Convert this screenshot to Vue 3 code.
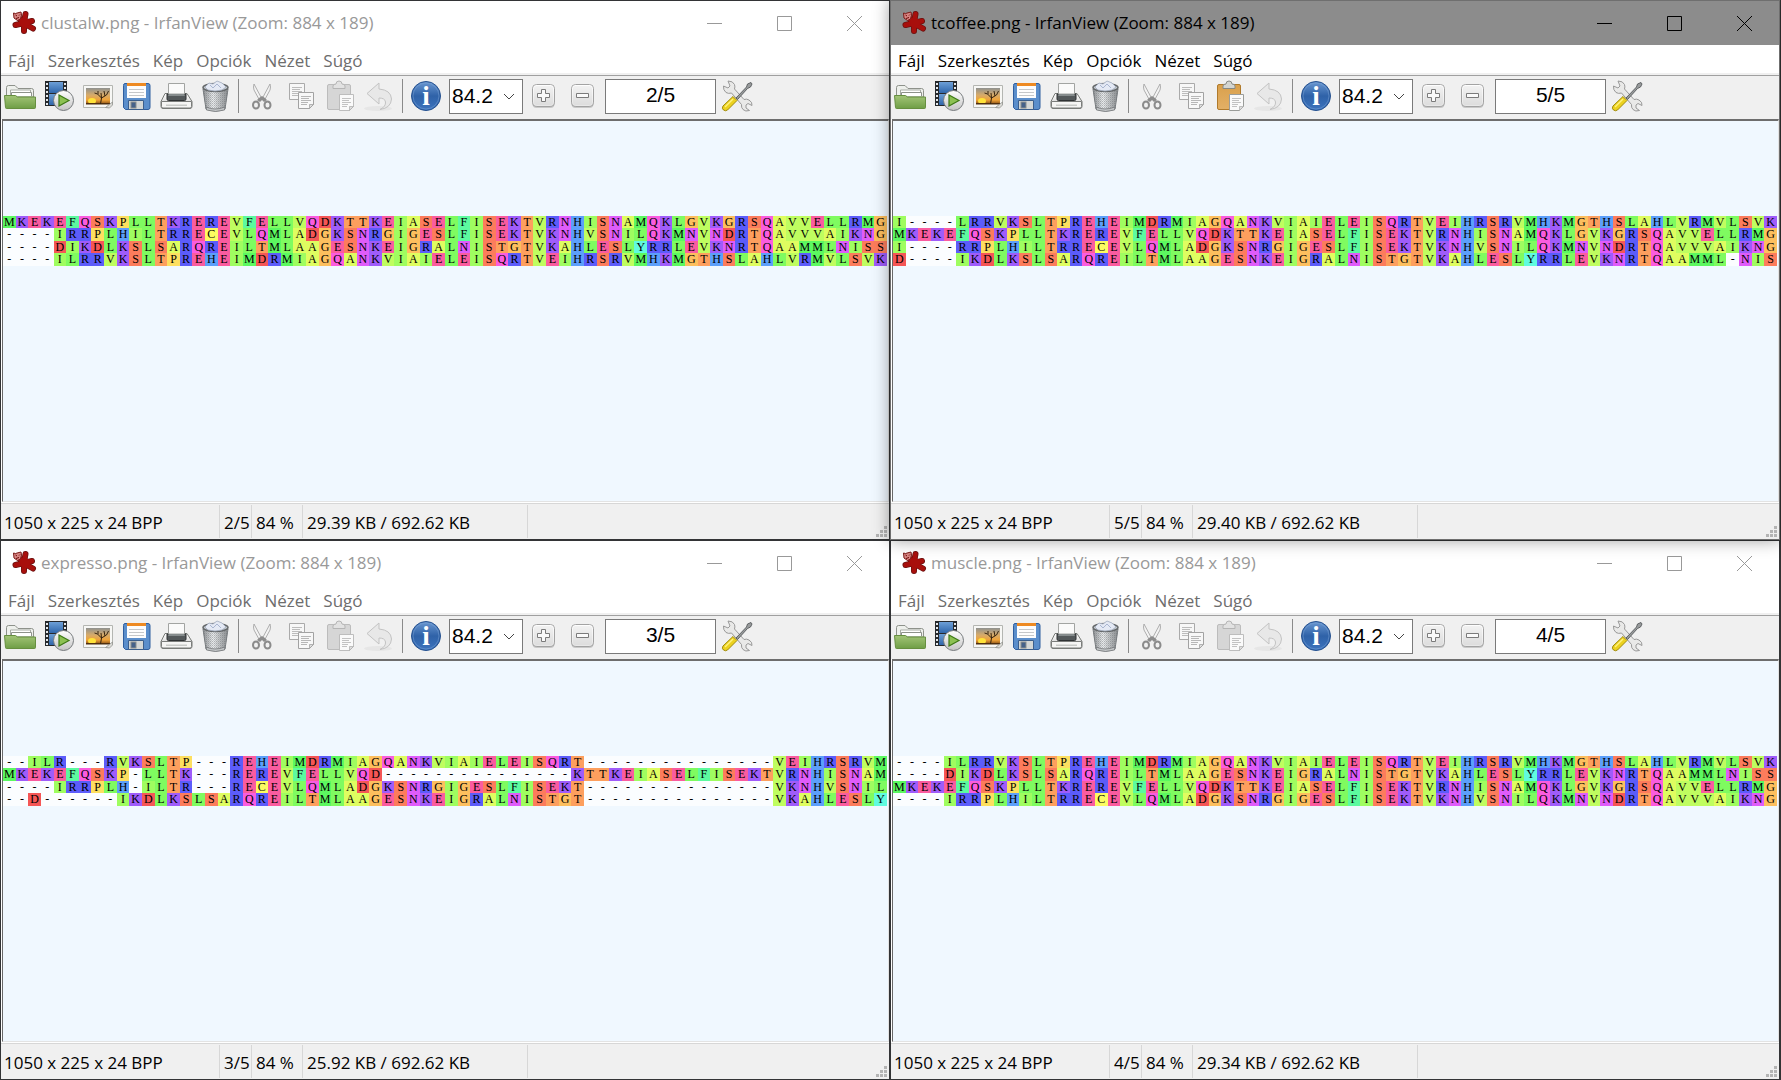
<script setup>
const seq = {
  muscle1: 'ILRRVKSLTPREHEIMDRMIAGQANKVIAIELEISQRTVEIHRSRVMHKMGTHSLAHLVRMVLSVK',
  muscle2: 'DIKDLKSLSARQREILTMLAAGESNKEIGRALNISTGTVKAHLESLYRRLEVKNRTQAAMMLNISS',
  muscle3: 'MKEKEFQSKPLLTKREREVFELLVQDKTTKEIASELFISEKTVRNHISNAMQKLGVKGRSQAVVELLRMG',
  muscle4: 'IRRPLHILTRRECEVLQMLADGKSNRGIGESLFISEKTVKNHVSNILQKMNVNDRTQAVVVAIKNG'
}
const gap = (n) => '-'.repeat(n)

const windows = [
  {
    file: 'clustalw.png', index: 2, size: '29.39 KB', active: false,
    rows: [seq.muscle3, gap(4) + seq.muscle4, gap(4) + seq.muscle2, gap(4) + seq.muscle1]
  },
  {
    file: 'tcoffee.png', index: 5, size: '29.40 KB', active: true,
    rows: [
      'I' + gap(4) + seq.muscle1.slice(1),
      seq.muscle3,
      'I' + gap(4) + seq.muscle4.slice(1),
      'D' + gap(4) + seq.muscle2.slice(1, -4) + '-NIS'
    ]
  },
  {
    file: 'expresso.png', index: 3, size: '25.92 KB', active: false,
    rows: [
      '--ILR---RVKSLTP---REHEIMDRMIAGQANKVIAIELEISQRT' + gap(15) + 'VEIHRSRVM',
      'MKEKEFQSKP-LLTK---REREVFELLVQD' + gap(15) + 'KTTKEIASELFISEKTVRNHISNAM',
      '----IRRPLH-ILTR---RECEVLQMLADGKSNRGIGESLFISEKT' + gap(15) + 'VKNHVSNIL',
      '--D------IKDLKSLSARQREILTMLAAGESNKEIGRALNISTGT' + gap(15) + 'VKAHLESLY'
    ]
  },
  {
    file: 'muscle.png', index: 4, size: '29.34 KB', active: false,
    rows: [gap(4) + seq.muscle1, gap(4) + seq.muscle2, seq.muscle3, gap(4) + seq.muscle4]
  }
]

const menus = ['Fájl', 'Szerkesztés', 'Kép', 'Opciók', 'Nézet', 'Súgó']
const residueClass = (c) => (c === '-' ? 'gap' : 'r' + c)
</script>

<template>
  <svg class="defs" width="0" height="0" aria-hidden="true">
    <defs>
      <linearGradient id="gGreen" x2="0" y2="1"><stop offset="0" stop-color="#a3c578" /><stop offset="1" stop-color="#6f9e46" /></linearGradient>
      <linearGradient id="gGrey" x2="0" y2="1"><stop offset="0" stop-color="#ffffff" /><stop offset="1" stop-color="#c4c4c4" /></linearGradient>
      <linearGradient id="gSky" x2="0" y2="1"><stop offset="0" stop-color="#8f9290" /><stop offset=".45" stop-color="#d8ab68" /><stop offset=".75" stop-color="#f0a236" /><stop offset="1" stop-color="#8a5218" /></linearGradient>
      <linearGradient id="gBlue" x2="0" y2="1"><stop offset="0" stop-color="#6d9fd6" /><stop offset="1" stop-color="#2f66ab" /></linearGradient>
      <linearGradient id="gInfo" x2="0" y2="1"><stop offset="0" stop-color="#6a97d0" /><stop offset=".5" stop-color="#2f62a8" /><stop offset="1" stop-color="#3d74bd" /></linearGradient>
      <linearGradient id="gTan" x2="0" y2="1"><stop offset="0" stop-color="#d9a04c" /><stop offset="1" stop-color="#e3b066" /></linearGradient>
      <linearGradient id="gCan"><stop offset="0" stop-color="#8b8e90" /><stop offset=".4" stop-color="#eceeef" /><stop offset="1" stop-color="#85888a" /></linearGradient>
      <pattern id="pMesh" width="2" height="2" patternUnits="userSpaceOnUse"><rect width="1" height="1" fill="#6f7377" /><rect x="1" y="1" width="1" height="1" fill="#9a9ea2" /></pattern>
    </defs>
  </svg>

  <main class="desktop">
    <section v-for="w in windows" :key="w.file" class="window" :class="{ active: w.active }">
      <header class="titlebar">
        <svg class="logo" width="28" height="28" viewBox="0 0 28 28">
          <g fill="none" stroke-linecap="round" stroke-linejoin="round">
            <path d="M13 13L14.500 5M13 14l8-2M14 15l8 4.500M13 14v8M13 14l-8.500 2M12 13L7 8" stroke="#6a1210" stroke-width="6" />
            <path d="M13 13L14.500 5M13 14l8-2M14 15l8 4.500M13 14v8M13 14l-8.500 2M12 13L7 8" stroke="#a80f0c" stroke-width="4.500" />
          </g>
          <circle cx="14" cy="14" r="5" fill="#a80f0c" />
          <path d="M2.500 4l2 .5L8 3.500 10 3l.5 3-1 4-3 1.500L3 9z" fill="#d98683" stroke="#7a1a18" stroke-width="1" />
          <path d="M4.500 6l1.500 1M9 5.500L8 6.500M5 9.500l3-1" stroke="#6b0706" fill="none" />
        </svg>
        <h1>{{ w.file }} - IrfanView (Zoom: 884 x 189)</h1>
        <button type="button" aria-label="Minimize"><svg width="15" height="15"><path d="M0 7.500h15" /></svg></button>
        <button type="button" aria-label="Maximize"><svg width="15" height="15"><path d="M.5.5h14v14H.5z" /></svg></button>
        <button type="button" aria-label="Close"><svg width="15" height="15"><path d="M0 0l15 15M15 0L0 15" /></svg></button>
      </header>

      <nav class="menubar">
        <button v-for="m in menus" :key="m" type="button">{{ m }}</button>
      </nav>

      <div class="toolbar">
        <button type="button" aria-label="Open">
          <svg viewBox="0 0 39 36">
            <path d="M5.500 18V8.500q0-2 2-2H14l3 3h13.500q2 0 2 2V18z" fill="#eef0ec" stroke="#8e928b" />
            <path d="M9.500 17v-6h20v6" fill="#fff" stroke="#a9ada6" />
            <path d="M10.500 17v-3.500h20V17" fill="#fff" stroke="#8e928b" />
            <path d="M3.500 16.500h11l2 1.500h18v10.500q0 1-1 1h-28q-1 0-1-1z" fill="url(#gGreen)" stroke="#668f3f" />
          </svg>
        </button>
        <button type="button" aria-label="Slideshow">
          <svg viewBox="0 0 39 36">
            <rect x="5" y="2" width="22" height="25" fill="#26292d" />
            <rect x="9" y="3" width="14" height="11" fill="url(#gBlue)" />
            <rect x="9" y="15" width="14" height="11" fill="url(#gBlue)" />
            <path d="M7 4v22M25 4v22" stroke="#e6e9ec" stroke-width="2" stroke-dasharray="2 2" />
            <circle cx="23.500" cy="21.500" r="10" fill="url(#gGrey)" stroke="#777b7e" />
            <path d="M19 16v11l10-5.500z" fill="#8cc152" stroke="#3e7a17" stroke-width="1.200" />
          </svg>
        </button>
        <button type="button" aria-label="Thumbnails">
          <svg viewBox="0 0 39 36">
            <path d="M4.500 6.500h29v18l-4 4h-25z" fill="#f7f7f5" stroke="#b4b6b2" />
            <rect x="7" y="9" width="24" height="16" fill="url(#gSky)" />
            <ellipse cx="13" cy="22" rx="4" ry="3" fill="#ffe23a" />
            <path d="M7 24h24v1.500H7z" fill="#50300f" />
            <path d="M21.500 25l1-6-4-4-3-1M22.500 19l5-3 2-4M19 15v-3M26 17l-1-5M22.500 19l-.5-5" fill="none" stroke="#34230f" stroke-width="1" />
            <path d="M33.500 23l-7 5.500 4 .5 3-3z" fill="#dcdcd8" stroke="#90928e" stroke-width=".8" />
          </svg>
        </button>
        <button type="button" aria-label="Save">
          <svg viewBox="0 0 39 36">
            <path d="M7 4.500h23q2 0 2 2v22q0 2-2 2H7.500l-2-2v-22q0-2 1.500-2z" fill="#5b8ecb" stroke="#2f5e9e" />
            <rect x="9" y="4" width="19" height="15" fill="#fdfdfd" />
            <rect x="9" y="4" width="19" height="3" fill="#ee8a22" />
            <path d="M11 10.500h15M11 13.500h15M11 16.500h15" stroke="#c5c7c9" />
            <path d="M10.500 21.500h15v9h-15z" fill="#d4d7d6" stroke="#3c5f8c" />
            <rect x="13" y="23" width="5" height="6" fill="#46628a" stroke="#8b908e" />
          </svg>
        </button>
        <button type="button" aria-label="Print">
          <svg viewBox="0 0 39 36">
            <path d="M8 14.500h22l5 8v5q0 2-2 2H6q-2 0-2-2v-5z" fill="url(#gGrey)" stroke="#777a77" />
            <path d="M4.500 22.500h30v5q0 1.500-1.500 1.500H6q-1.500 0-1.500-1.500z" fill="#f5f5f4" stroke="#7b7d7b" />
            <path d="M10 15h19v5q0 1.500-1.500 1.500h-16Q10 21.500 10 20z" fill="#53585a" stroke="#2e3133" />
            <path d="M11.500 4.500h16V15h-16z" fill="#fafafa" stroke="#a2a4a2" />
            <path d="M12 15h15l1 2H11z" fill="#858b8c" />
            <path d="M9 25.500h21v1.500H9z" fill="#c8cac8" />
          </svg>
        </button>
        <button type="button" aria-label="Delete">
          <svg viewBox="0 0 39 36">
            <path d="M7 10h25l-3 20q-9 4-19 0z" fill="url(#gCan)" stroke="#75797c" />
            <path d="M7 10h25l-3 20q-9 4-19 0z" fill="url(#pMesh)" opacity=".45" />
            <path d="M10 28q9 4 19 0l-.5 3q-9 3-18 0z" fill="#c3c6c8" stroke="#696c6e" stroke-width=".7" />
            <ellipse cx="19.500" cy="8.500" rx="12.500" ry="4" fill="#c7ccd0" stroke="#66696b" stroke-width="1.500" />
            <path d="M9 8l4-4 4 1 4-3 5 2 4 4-4 3-7 1-7-1z" fill="#e4e9f4" stroke="#a0a9bb" stroke-width=".8" />
            <path d="M14 6l3 3 4-4 4 4" fill="none" stroke="#a9b5cf" />
          </svg>
        </button>
        <i class="separator"></i>
        <button type="button" aria-label="Cut">
          <svg viewBox="0 0 39 36">
            <path d="M11 5l8 15-2 2-6-11q-1-3 0-6zM27 5l-8 15 2 2 6-11q1-3 0-6z" fill="#f3f3f3" stroke="#a5a5a5" stroke-width=".9" />
            <path d="M16 19l3-2 3 2 2 2-3 2-2-2-2 2-3-2z" fill="#8d8d8d" />
            <ellipse cx="13" cy="26" rx="3" ry="3.500" fill="none" stroke="#8b8b8b" stroke-width="2" />
            <ellipse cx="24.500" cy="26" rx="3" ry="3.500" fill="none" stroke="#8b8b8b" stroke-width="2" />
          </svg>
        </button>
        <button type="button" aria-label="Copy">
          <svg viewBox="0 0 39 36">
            <path d="M7.500 4.500h15v16h-15z" fill="#f7f7f7" stroke="#aaa" />
            <path d="M10 8.500h10M10 10.500h8M10 12.500h10M10 14.500h7M10 16.500h8" stroke="#bcbcbc" />
            <path d="M16.500 13.500h15v12l-4 4h-11z" fill="#f7f7f7" stroke="#a2a2a2" />
            <path d="M19 17.500h10M19 19.500h8M19 21.500h10M19 23.500h7M19 25.500h6" stroke="#b6b6b6" />
            <path d="M31.500 25.500h-4v4z" fill="#ddd" stroke="#999" stroke-width=".7" />
          </svg>
        </button>
        <button type="button" aria-label="Paste">
          <svg viewBox="0 0 39 36">
            <rect x="6.500" y="5.500" width="23" height="25" rx="1.500" :fill="w.active ? 'url(#gTan)' : '#d6d6d6'" :stroke="w.active ? '#b07a2c' : '#bcbcbc'" />
            <path d="M12 9.500V7q0-2 3-2 0-3 3-3t3 3q3 0 3 2v2.500z" :fill="w.active ? '#d3d5d2' : '#e2e2e2'" :stroke="w.active ? '#868985' : '#b5b5b5'" />
            <path d="M18.500 15.500h14v12l-4 4h-10z" fill="#fafafa" :stroke="w.active ? '#9a9c99' : '#bdbdbd'" />
            <path d="M21 19.500h9M21 21.500h7M21 23.500h9M21 25.500h6M21 27.500h5" stroke="#c2c2c2" />
            <path d="M32.500 27.500h-4v4z" fill="#ddd" stroke="#aaa" stroke-width=".7" />
          </svg>
        </button>
        <button type="button" aria-label="Undo">
          <svg viewBox="0 0 39 36">
            <ellipse cx="18" cy="29.500" rx="14" ry="2.500" fill="#e6e6e6" />
            <path d="M7 14.500L19 4v6q12 1 12.500 10-.5 9-11.500 10.500 6-3 5.500-7.500-.5-4-6.500-4v6z" fill="#e8e8e8" stroke="#c3c3c3" />
          </svg>
        </button>
        <i class="separator"></i>
        <button type="button" aria-label="Information">
          <svg viewBox="0 0 39 36">
            <circle cx="19" cy="17" r="14.500" fill="url(#gInfo)" stroke="#24508f" />
            <circle cx="19" cy="17" r="13" fill="none" stroke="#7da4d6" stroke-width=".8" opacity=".6" />
            <text x="19" y="26" text-anchor="middle" class="glyph">i</text>
          </svg>
        </button>

        <label class="zoom">
          <select aria-label="Zoom"><option>84.2</option></select>
          <svg width="12" height="8" viewBox="0 0 12 8"><path d="M1 1l5 5 5-5" /></svg>
        </label>
        <button type="button" aria-label="Zoom in">
          <svg viewBox="0 0 39 36">
            <rect x="8.500" y="6" width="22" height="23" rx="4" fill="#c9c9c9" />
            <rect x="8.500" y="5.500" width="22" height="22" rx="4" fill="url(#gGrey)" stroke="#a3a3a3" />
            <rect x="9.500" y="6.500" width="20" height="20" rx="3" fill="#ececec" opacity=".6" stroke="#fff" />
            <path d="M17.500 10.500h4v4h4v4h-4v4h-4v-4h-4v-4h4z" fill="#fafafa" stroke="#7b7b7b" />
          </svg>
        </button>
        <button type="button" aria-label="Zoom out">
          <svg viewBox="0 0 39 36">
            <rect x="8.500" y="6" width="22" height="23" rx="4" fill="#c9c9c9" />
            <rect x="8.500" y="5.500" width="22" height="22" rx="4" fill="url(#gGrey)" stroke="#a3a3a3" />
            <rect x="9.500" y="6.500" width="20" height="20" rx="3" fill="#ececec" opacity=".6" stroke="#fff" />
            <path d="M13.500 14.500h12v4h-12z" fill="#fafafa" stroke="#7b7b7b" />
          </svg>
        </button>
        <input class="page" type="text" aria-label="Page" :value="w.index + '/5'" />
        <button type="button" aria-label="Settings">
          <svg viewBox="0 0 39 36">
            <path d="M5.500 7L10 9l2-2-2-5q5 0 6.500 3.500.8 2.500 0 4.500L26 20.500q2.500-1 5 .5 3.500 2 3 5.500l-4-2-2 1.500v3l3.500 2.500q-4 1.500-6.500-1-2-2-1.500-5L13.500 14q-3 1-5.500-.5Q5 11 5.500 7z" fill="#e9e9e8" stroke="#999" />
            <path d="M18 19L28.500 8l1-3L33 3.500 34 5l-1.500 3-3 1.500L19.500 20.500z" fill="#999c9d" stroke="#55585a" stroke-width=".9" />
            <path d="M15 17.500l4 4L9.500 31q-2 1.500-4 0t-.5-4z" fill="#ecd11f" stroke="#a08b0c" />
            <path d="M15 20l-8 8" stroke="#fff27d" stroke-width="1.500" />
          </svg>
        </button>
      </div>

      <div class="canvas">
        <div class="picture">
          <div class="alignment">
            <template v-for="(row, r) in w.rows" :key="r">
              <span v-for="(c, i) in row" :key="i" :class="residueClass(c)">{{ c }}</span>
            </template>
          </div>
        </div>
      </div>

      <footer class="status">
        <span class="dims">1050 x 225 x 24 BPP</span>
        <span class="pos">{{ w.index }}/5</span>
        <span class="pct">84 %</span>
        <span class="bytes">{{ w.size }} / 692.62 KB</span>
        <svg class="grip" width="12" height="12"><path d="M8 0h3v3H8zM4 4h3v3H4zM8 4h3v3H8zM0 8h3v3H0zM4 8h3v3H4zM8 8h3v3H8z" fill="#b4b4b4" /></svg>
      </footer>
    </section>
  </main>
</template>

<style>
body {
  margin: 0;
  background: #333;
}
</style>

<style scoped>
.defs {
  position: absolute;
}
.desktop {
  display: grid;
  grid-template-columns: 1fr 1fr;
  grid-template-rows: 1fr 1fr;
  box-sizing: border-box;
  height: 100vh;
  padding-right: 1px;
  overflow: hidden;
  font-family: "Open Sans", "Noto Sans", sans-serif;
  font-size: 17px;
}
.window {
  display: flex;
  flex-direction: column;
  min-width: 0;
  box-sizing: border-box;
  border: 1px solid #333436;
  background: #fff;
  color: #6d6d6d;
}
.window.active {
  position: relative;
  z-index: 1;
  border-color: #6f6f6f;
  box-shadow: 0 0 16px rgba(0, 0, 0, 0.4);
  color: #000;
}
button {
  padding: 0;
  border: 0;
  background: none;
  font: inherit;
  color: inherit;
}
.titlebar {
  display: flex;
  align-items: center;
  flex: none;
  height: 44px;
  padding-left: 10px;
  color: #999;
}
.active .titlebar {
  background: #8c8c8c;
  color: #000;
}
.logo {
  flex: none;
}
h1 {
  flex: 1;
  margin: 0 0 0 2px;
  font-size: 17px;
  font-weight: 400;
  line-height: 24px;
  white-space: nowrap;
}
.titlebar button {
  display: flex;
  align-items: center;
  justify-content: center;
  width: 70px;
  height: 44px;
}
.titlebar button path {
  fill: none;
  stroke: currentColor;
}
.menubar {
  display: flex;
  flex: none;
  gap: 13px;
  height: 28px;
  padding-left: 7px;
  border-bottom: 2px solid #f0f0f0;
}
.menubar button {
  line-height: 32px;
  height: 28px;
}
.toolbar {
  display: flex;
  align-items: flex-start;
  flex: none;
  height: 40px;
  padding-top: 3px;
  border-top: 1px solid #a0a0a0;
  background: #f0f0f0;
}
.toolbar button {
  flex: none;
  width: 39px;
  height: 36px;
}
.toolbar button svg {
  display: block;
  width: 39px;
  height: 36px;
}
.separator {
  width: 1px;
  height: 34px;
  margin: 0 4px 0 3px;
  background: #8a8a8a;
}
.glyph {
  font: bold 27px "Liberation Serif", serif;
  fill: #fff;
}
.zoom {
  display: flex;
  align-items: center;
  box-sizing: border-box;
  width: 74px;
  height: 35px;
  margin: 0 1px 0 3px;
  padding-right: 7px;
  border: 1px solid #7a7a7a;
  background: #fff;
}
.zoom select {
  flex: 1;
  min-width: 0;
  height: 31px;
  padding: 0 0 2px 2px;
  border: 0;
  appearance: none;
  background: none;
  color: #000;
  font: 21px "Liberation Sans", sans-serif;
}
.zoom path {
  fill: none;
  stroke: #444;
}
.page {
  box-sizing: border-box;
  width: 111px;
  height: 35px;
  margin: 0 2px 0 3px;
  padding: 0 0 3px;
  border: 1px solid #7a7a7a;
  border-radius: 0;
  background: #fff;
  color: #000;
  font: 21px "Liberation Sans", sans-serif;
  text-align: center;
}
.canvas {
  display: flex;
  align-items: center;
  justify-content: center;
  flex: 1;
  min-height: 0;
  margin: 0 0 0 1px;
  border: 1px solid #e3e3e3;
  border-top: 2px solid #6d6d6d;
  border-left-color: #696969;
  background: #f0f8ff;
}
.picture {
  width: 100%;
  height: 189px;
  margin: 0 1px 2px 0;
}
.alignment {
  display: grid;
  grid-template-columns: repeat(70, 1fr);
  grid-template-rows: repeat(4, 1fr);
  height: 50px;
  color: #000;
  font: 12px/12px "Liberation Serif", serif;
  text-align: center;
}
.alignment span {
  min-width: 0;
}
.gap { background: #fbfdff; }
.rD { background: #f55656; }
.rS { background: #fc7c5c; }
.rT { background: #fd9f5e; }
.rG { background: #fdbf5e; }
.rP { background: #fddf60; }
.rC { background: #fcfc62; }
.rA { background: #dffd60; }
.rV { background: #bffd60; }
.rI { background: #9ffd60; }
.rL { background: #7ffb60; }
.rM { background: #5cf860; }
.rF { background: #5cfa9f; }
.rY { background: #60fbdf; }
.rH { background: #5c9ffa; }
.rR { background: #5c5cfa; }
.rK { background: #9f5cfa; }
.rN { background: #df5cfa; }
.rQ { background: #fb5cdf; }
.rE { background: #fa5c9f; }
.status {
  display: flex;
  align-items: center;
  flex: none;
  height: 35px;
  margin-top: 1px;
  border-top: 1px solid #d7d7d7;
  background: #f0f0f0;
  color: #000;
  white-space: nowrap;
}
.status span {
  box-sizing: border-box;
  height: 33px;
  padding-left: 4px;
  border-right: 1px solid #d7d7d7;
  line-height: 36px;
}
.status .dims { width: 219px; padding-left: 3px; }
.status .pos { width: 32px; }
.status .pct { width: 51px; }
.status .bytes { width: 225px; }
.grip {
  align-self: flex-end;
  margin: 0 1px 1px auto;
}
</style>
